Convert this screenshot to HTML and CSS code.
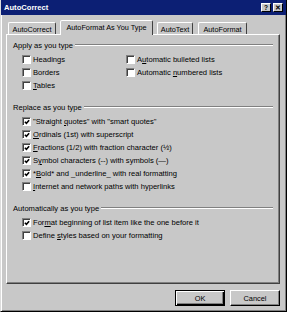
FILE: index.html
```html
<!DOCTYPE html>
<html lang="en">
<head>
    <meta charset="UTF-8">
    <title>AutoCorrect</title>
    <link rel="stylesheet" href="styles.css">
</head>
<body>
    <div class="window">
        <div class="titlebar">
            <span class="title">AutoCorrect</span>
            <div class="ctrls">
                <span class="cbtn">?</span>
                <span class="cbtn">&#x2715;</span>
            </div>
        </div>

        <div class="tabs">
            <div class="tab w-ac">AutoCorrect</div>
            <div class="tab active w-afy">AutoFormat As You Type</div>
            <div class="tab w-at">AutoText</div>
            <div class="tab w-af">AutoFormat</div>
        </div>

        <div class="panel">
            <!-- Apply as you type -->
            <div class="group">
                <div class="group-head"><span>Apply as you type</span><span class="line"></span></div>
                <div class="cols">
                    <div class="row"><span class="box"></span><span class="lbl">Headings</span></div>
                    <div class="row"><span class="box"></span><span class="lbl">A<u>u</u>tomatic bulleted lists</span></div>
                    <div class="row"><span class="box"></span><span class="lbl">Borders</span></div>
                    <div class="row"><span class="box"></span><span class="lbl">Automatic <u>n</u>umbered lists</span></div>
                    <div class="row"><span class="box"></span><span class="lbl"><u>T</u>ables</span></div>
                </div>
            </div>

            <!-- Replace as you type -->
            <div class="group">
                <div class="group-head"><span>Replace as you type</span><span class="line"></span></div>
                <div class="row"><span class="box on"><svg viewBox="0 0 7 7"><path d="M1 3.2 L2.8 5 L6 1.4"/></svg></span><span class="lbl">"Straight <u>q</u>uotes" with "smart quotes"</span></div>
                <div class="row"><span class="box on"><svg viewBox="0 0 7 7"><path d="M1 3.2 L2.8 5 L6 1.4"/></svg></span><span class="lbl"><u>O</u>rdinals (1st) with superscript</span></div>
                <div class="row"><span class="box on"><svg viewBox="0 0 7 7"><path d="M1 3.2 L2.8 5 L6 1.4"/></svg></span><span class="lbl"><u>F</u>ractions (1/2) with fraction character (&frac12;)</span></div>
                <div class="row"><span class="box on"><svg viewBox="0 0 7 7"><path d="M1 3.2 L2.8 5 L6 1.4"/></svg></span><span class="lbl">S<u>y</u>mbol characters (--) with symbols (&mdash;)</span></div>
                <div class="row"><span class="box on"><svg viewBox="0 0 7 7"><path d="M1 3.2 L2.8 5 L6 1.4"/></svg></span><span class="lbl">*<u>B</u>old* and _underline_ with real formatting</span></div>
                <div class="row"><span class="box"></span><span class="lbl"><u>I</u>nternet and network paths with hyperlinks</span></div>
            </div>

            <!-- Automatically as you type -->
            <div class="group">
                <div class="group-head"><span>Automatically as you type</span><span class="line"></span></div>
                <div class="row"><span class="box on"><svg viewBox="0 0 7 7"><path d="M1 3.2 L2.8 5 L6 1.4"/></svg></span><span class="lbl">For<u>m</u>at beginning of list item like the one before it</span></div>
                <div class="row"><span class="box"></span><span class="lbl">Define <u>s</u>tyles based on your formatting</span></div>
            </div>
        </div>

        <div class="actions">
            <button class="btn default">OK</button>
            <button class="btn">Cancel</button>
        </div>
    </div>
</body>
</html>
```

FILE: styles.css
```css
* {
    box-sizing: border-box;
}
body {
    margin: 0;
    background: #c8c8c8;
    font-family: "Liberation Sans", Arial, sans-serif;
    font-size: 7.6px;
    color: #000;
}
.window {
    width: 287px;
    height: 312px;
    display: flex;
    flex-direction: column;
    background: #c8c8c8;
    border: 1px solid;
    border-top: 0;
    border-color: #dcdcdc #000 #000 #dcdcdc;
    box-shadow: inset 1px 0 #fff, inset -1px -1px #808080;
    padding: 0 1px 1px 1px;
}
.titlebar {
    height: 15px;
    margin: 0 -1px;
    background: #0c1f74;
    color: #fff;
    display: flex;
    align-items: center;
    justify-content: space-between;
    padding-left: 3px;
}
.title {
    font-weight: bold;
    font-size: 7.6px;
}
.ctrls {
    display: flex;
    gap: 2px;
    margin-right: 3px;
}
.cbtn {
    width: 10px;
    height: 9px;
    background: #c8c8c8;
    color: #000;
    border: 1px solid;
    border-color: #fff #000 #000 #fff;
    font-size: 6.5px;
    font-weight: bold;
    display: flex;
    align-items: center;
    justify-content: center;
}
.tabs {
    display: flex;
    align-items: flex-end;
    height: 14px;
    margin-top: 5px;
    padding-left: 6px;
    gap: 4px;
}
.tab {
    height: 12px;
    border: 1px solid;
    border-bottom: 0;
    border-color: #fff #404040 transparent #fff;
    border-radius: 2px 2px 0 0;
    display: flex;
    align-items: center;
    justify-content: center;
    padding-top: 1px;
    font-size: 7.3px;
}
.tab.active {
    height: 15px;
    margin-bottom: -1px;
    background: #c8c8c8;
    position: relative;
    z-index: 1;
    padding-top: 0;
    padding-bottom: 2px;
}
.w-ac { width: 48px; }
.w-afy { width: 93px; }
.w-at { width: 36px; }
.w-af { width: 49px; margin-left: 1px; }
.panel {
    height: 250px;
    margin: 0 5px 0 4px;
    border: 1px solid;
    border-color: #fff #404040 #404040 #fff;
    box-shadow: inset -1px -1px #808080;
    padding: 5px 4px 0 6px;
}
.group {
    margin-bottom: 10px;
}
.group-head {
    display: flex;
    align-items: center;
    height: 10px;
    gap: 2px;
    margin-bottom: 3px;
}
.line {
    flex: 1;
    height: 2px;
    border-top: 1px solid #808080;
    border-bottom: 1px solid #fff;
    margin-right: 2px;
}
.cols {
    display: grid;
    grid-template-columns: 104px 1fr;
}
.row {
    display: flex;
    align-items: center;
    height: 13px;
    padding-left: 9px;
}
.box {
    width: 9px;
    height: 9px;
    flex: none;
    background: #fff;
    border: 1px solid;
    border-color: #808080 #fff #fff #808080;
    box-shadow: inset 1px 1px #404040;
    display: flex;
    align-items: center;
    justify-content: center;
}
.box svg {
    width: 6px;
    height: 6px;
    margin: 1px 0 0 1px;
}
.box path {
    fill: none;
    stroke: #000;
    stroke-width: 1.8;
}
.lbl {
    margin-left: 2px;
    white-space: nowrap;
}
.actions {
    display: flex;
    justify-content: flex-end;
    gap: 5px;
    margin-top: 6px;
    padding-right: 5px;
}
.btn {
    width: 50px;
    height: 16px;
    padding: 0;
    background: #c8c8c8;
    font-family: "Liberation Sans", Arial, sans-serif;
    font-size: 7.4px;
    color: #000;
    border: 1px solid;
    border-color: #fff #000 #000 #fff;
    box-shadow: inset -1px -1px #808080;
}
.btn.default {
    border-color: #000;
    box-shadow: inset 1px 1px #fff, inset -1px -1px #000, inset -2px -2px #808080;
}
```
